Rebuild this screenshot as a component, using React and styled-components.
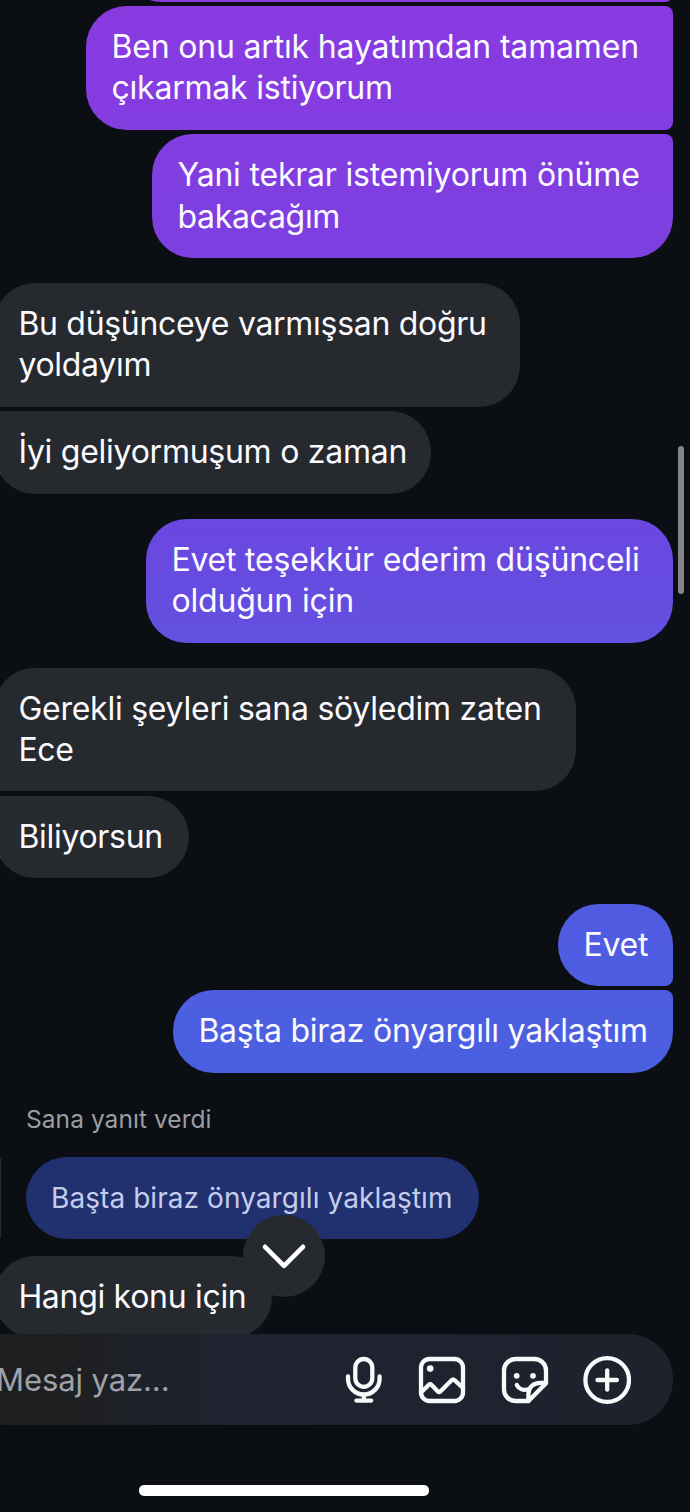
import React from 'react'
import styled, { createGlobalStyle } from 'styled-components'

// each line is [text, letter spacing]
const messages = [
  { mine: true, w: 552, top: -80.8, joinTop: true, joinBottom: true, lines: [] },
  {
    mine: true,
    w: 587,
    joinTop: true,
    joinBottom: true,
    lines: [
      ['Ben onu artık hayatımdan tamamen', -0.17],
      ['çıkarmak istiyorum', -0.2],
    ],
  },
  {
    mine: true,
    w: 521,
    joinTop: true,
    lines: [
      ['Yani tekrar istemiyorum önüme', -0.2],
      ['bakacağım', -0.3],
    ],
  },
  {
    w: 526,
    first: true,
    joinBottom: true,
    lines: [
      ['Bu düşünceye varmışsan doğru', -0.3],
      ['yoldayım', -0.3],
    ],
  },
  { w: 437, joinTop: true, lines: [['İyi geliyormuşum o zaman', -0.26]] },
  {
    mine: true,
    w: 527,
    first: true,
    lines: [
      ['Evet teşekkür ederim düşünceli', -0.2],
      ['olduğun için', -0.17],
    ],
  },
  {
    w: 582,
    first: true,
    joinBottom: true,
    lines: [
      ['Gerekli şeyleri sana söyledim zaten', -0.25],
      ['Ece', -0.3],
    ],
  },
  { w: 195, joinTop: true, lines: [['Biliyorsun', -0.3]] },
  { mine: true, w: 115, first: true, joinBottom: true, lines: [['Evet', -0.2]] },
  {
    mine: true,
    w: 500,
    joinTop: true,
    lines: [['Başta biraz önyargılı yaklaştım', -0.23]],
  },
]

const Message = ({ mine, w, top, first, joinTop, joinBottom, lines }) => (
  <Bubble
    $mine={mine}
    $w={w}
    $top={top}
    $first={first}
    $joinTop={joinTop}
    $joinBottom={joinBottom}
  >
    {lines.map(([text, tracking]) => (
      <Line key={text} $tracking={tracking}>
        {text}
      </Line>
    ))}
  </Bubble>
)

const App = () => {
  return (
    <Screen>
      <GlobalStyle />
      <Thread>
        {messages.map((message, index) => (
          <Message key={index} {...message} />
        ))}
        <ReplyLabel>Sana yanıt verdi</ReplyLabel>
        <ReplyRow>
          <ReplyBar />
          <Quote>Başta biraz önyargılı yaklaştım</Quote>
        </ReplyRow>
        <Message w={278} top={17} lines={[['Hangi konu için', -0.3]]} />
      </Thread>
      <ScrollThumb />
      <ScrollDown aria-label='scroll down'>
        <svg width='82' height='82' viewBox='0 0 82 82'>
          <path d='M22 31.8 41 50.8 60 31.8' />
        </svg>
      </ScrollDown>
      <Composer>
        <Placeholder>Mesaj yaz...</Placeholder>
        <Actions>
          <Icon width='40' height='48' viewBox='0 0 40 48'>
            <rect x='11.3' y='3' width='17' height='27.8' rx='8.5' />
            <path d='M4 20.5v2.2a15.8 15.8 0 0 0 31.600 0v-2.200M19.800 38.500v6M12.400 44.600h14.800' />
          </Icon>
          <Icon width='48' height='48' viewBox='0 0 48 48'>
            <rect x='3' y='3' width='42' height='42' rx='8.5' />
            <circle className='dot' cx='12.2' cy='12.6' r='3.3' />
            <path d='M3.500 36 10.700 29q1.500-1.400 3 0L19.600 35.300q1.500 1.500 3 0L33.600 24.200q1.500-1.500 3 0L45 32' />
          </Icon>
          <Icon width='48' height='48' viewBox='0 0 48 48'>
            <path d='M27.500 45H14.500A11.500 11.500 0 0 1 3 33.500V14.500A11.500 11.500 0 0 1 14.500 3H33.500A11.500 11.500 0 0 1 45 14.500V27.200Z' />
            <path d='M45 26.800H39.500C32 26.800 27.400 31.500 27.400 38V45' />
            <path d='M15.800 29c2.200 4.300 6.800 5.900 11.600 4.200' />
            <circle className='dot' cx='15.700' cy='19.800' r='2.900' />
            <circle className='dot' cx='32' cy='19.800' r='2.900' />
          </Icon>
          <Icon width='48' height='48' viewBox='0 0 48 48'>
            <circle cx='24.200' cy='24' r='21.800' />
            <path d='M24.200 14.300v19.400M14.500 24h19.400' />
          </Icon>
        </Actions>
      </Composer>
      <HomeIndicator />
    </Screen>
  )
}

const GlobalStyle = createGlobalStyle`
  * {
    box-sizing: border-box;
  }
  body {
    margin: 0;
    background: #0b0e13;
    font-family: Inter, 'Liberation Sans', sans-serif;
  }
`

const Screen = styled.main`
  position: relative;
  width: 690px;
  height: 1512px;
  overflow: hidden;
  display: flex;
  flex-direction: column;
  background: #0b0e13;
`

const Thread = styled.section`
  width: 696px;
  height: 1334px;
  flex: none;
  margin-left: -6px;
  padding-right: 17px;
  overflow: hidden;
  display: flex;
  flex-direction: column;
  align-items: flex-start;
`

const Bubble = styled.div`
  flex: none;
  width: ${(p) => p.$w}px;
  min-height: 82.4px;
  margin-top: ${(p) => p.$top ?? (p.$first ? 25.2 : 4.5)}px;
  align-self: ${(p) => (p.$mine ? 'flex-end' : 'flex-start')};
  padding: 20px 0 21.1px ${(p) => (p.$mine ? 25.4 : 24.4)}px;
  border-radius: 41px;
  ${(p) => p.$joinTop && `border-top-${p.$mine ? 'right' : 'left'}-radius: 8px;`}
  ${(p) =>
    p.$joinBottom && `border-bottom-${p.$mine ? 'right' : 'left'}-radius: 8px;`}
  color: #fbfaff;
  background: ${(p) =>
    p.$mine
      ? `linear-gradient(
          #893ae0 0,
          #7d3fe0 250px,
          #6a47e1 520px,
          #6350e0 640px,
          #515be2 905px,
          #4a60e0 1070px
        ) fixed`
      : '#26292e'};
`

const Line = styled.p`
  margin: 0;
  font-size: 32px;
  line-height: 41.3px;
  white-space: nowrap;
  letter-spacing: ${(p) => p.$tracking}px;
`

const ReplyLabel = styled.p`
  margin: 31px 0 0 32px;
  font-size: 24.5px;
  line-height: 30px;
  letter-spacing: 0.06px;
  color: #9a9da2;
`

const ReplyRow = styled.div`
  flex: none;
  display: flex;
  align-items: center;
  gap: 25px;
  margin: 23px 0 0 6px;
`

const ReplyBar = styled.span`
  width: 1px;
  height: 80px;
  background: #26292e;
`

const Quote = styled.div`
  width: 453px;
  height: 82px;
  padding-left: 25px;
  border-radius: 41px;
  font-size: 28px;
  line-height: 82px;
  letter-spacing: 0.07px;
  white-space: nowrap;
  color: #c5cdec;
  background: #21306f;
`

const ScrollThumb = styled.span`
  position: absolute;
  top: 446px;
  right: 6px;
  width: 6.5px;
  height: 148px;
  border-radius: 3px;
  background: #858689;
`

const ScrollDown = styled.button`
  position: absolute;
  left: 242.5px;
  top: 1215px;
  width: 82px;
  height: 82px;
  padding: 0;
  border: 0;
  border-radius: 50%;
  background: #26292d;
  svg {
    display: block;
  }
  path {
    fill: none;
    stroke: #fff;
    stroke-width: 4.6;
    stroke-linecap: round;
    stroke-linejoin: round;
  }
`

const Composer = styled.footer`
  width: 673px;
  height: 91px;
  flex: none;
  display: flex;
  align-items: center;
  justify-content: space-between;
  padding-right: 42px;
  border-radius: 0 45px 45px 0;
  background: linear-gradient(
    90deg,
    #1e1e20 0,
    #1e1f21 70px,
    #1d212a 150px,
    #1e2330 230px,
    #1f222d 673px
  );
`

const Placeholder = styled.span`
  margin-left: -4px;
  font-size: 31px;
  letter-spacing: -0.1px;
  color: #9fa2a9;
`

const Actions = styled.div`
  display: flex;
  gap: 34.5px;
`

const Icon = styled.svg`
  fill: none;
  stroke: #f8f9fb;
  stroke-width: 4.3;
  stroke-linecap: round;
  stroke-linejoin: round;
  .dot {
    fill: #f8f9fb;
    stroke: none;
  }
`

const HomeIndicator = styled.div`
  width: 290px;
  height: 11px;
  flex: none;
  margin: 60px 0 0 139px;
  border-radius: 5px;
  background: #fff;
`

export default App
